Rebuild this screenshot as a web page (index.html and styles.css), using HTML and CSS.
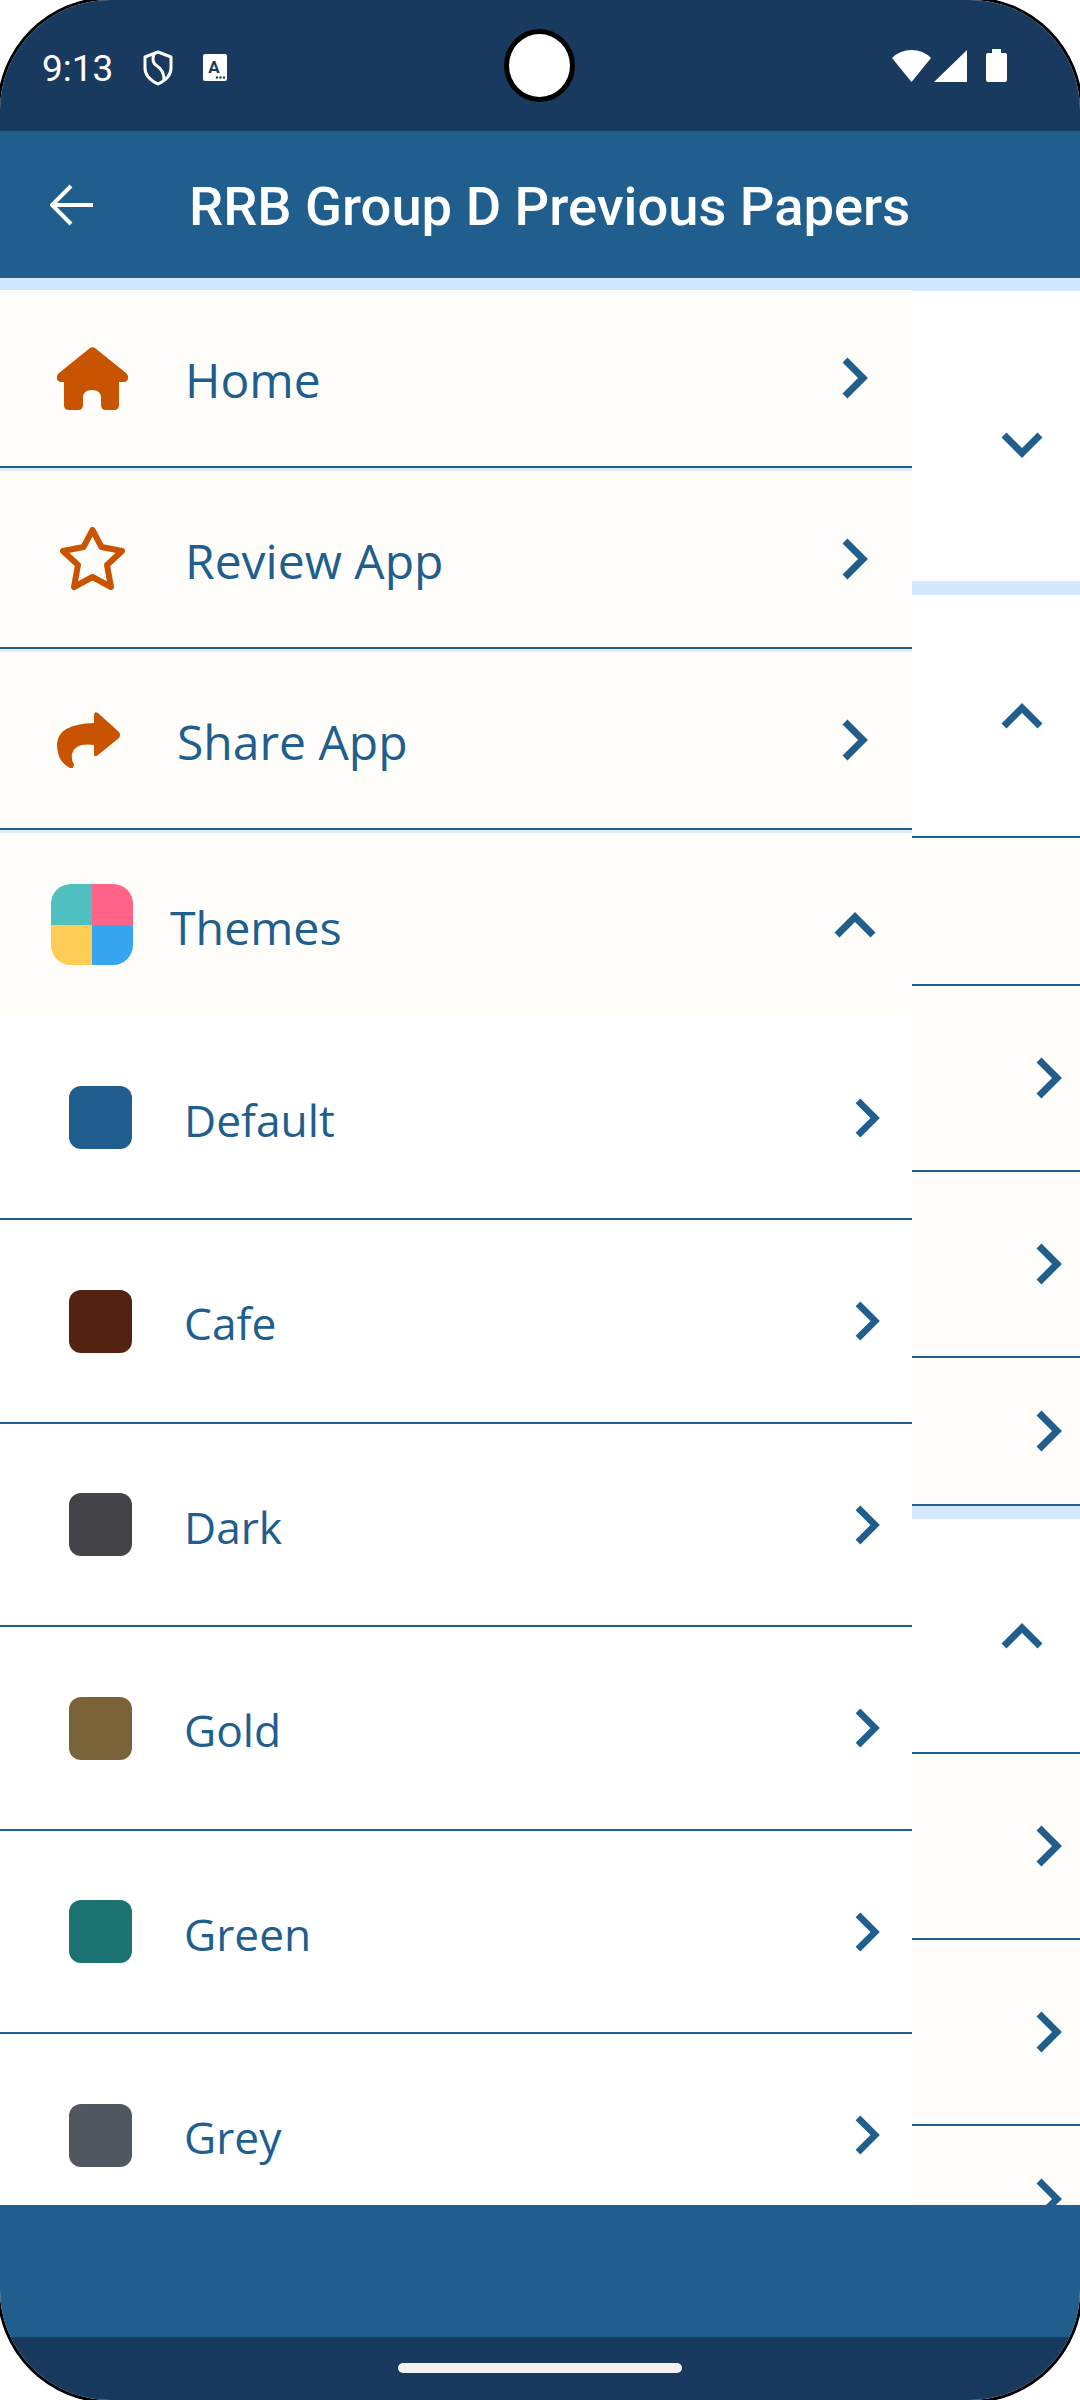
FILE: index.html
```html
<!DOCTYPE html>
<html lang="en">
<head>
    <meta charset="UTF-8">
    <meta name="viewport" content="width=device-width, initial-scale=1.0">
    <title>RRB Group D Previous Papers</title>
    <link rel="stylesheet" href="styles.css">
</head>
<body>
    <svg class="defs" width="0" height="0">
        <symbol id="chev-right" viewBox="0 0 26 42">
            <polyline points="3,3 21,21 3,39" fill="none" stroke="#205e8e" stroke-width="7"/>
        </symbol>
        <symbol id="chev-up" viewBox="0 0 42 26">
            <polyline points="3,23 21,5 39,23" fill="none" stroke="#205e8e" stroke-width="7"/>
        </symbol>
        <symbol id="chev-down" viewBox="0 0 42 26">
            <polyline points="3,3 21,21 39,3" fill="none" stroke="#205e8e" stroke-width="7"/>
        </symbol>
    </svg>

    <div class="phone">
        <div class="status">
            <span class="time">9:13</span>
            <svg class="shield" viewBox="0 0 30 36">
                <path d="M15 2 L28 7 V18 Q28 28 15 34 Q2 28 2 18 V7 Z" fill="none" stroke="#fff" stroke-width="3" stroke-linejoin="round"/>
                <path d="M11 4 Q8 12 14 16 Q21 20 21 30" fill="none" stroke="#fff" stroke-width="3"/>
            </svg>
            <svg class="a-icon" viewBox="0 0 24 27">
                <rect width="24" height="27" rx="2" fill="#fff"/>
                <text x="11" y="19" class="a-letter">A</text>
                <circle cx="14" cy="23.5" r="1.2" fill="#173a5e"/>
                <circle cx="17.5" cy="23.5" r="1.2" fill="#173a5e"/>
                <circle cx="21" cy="23.5" r="1.2" fill="#173a5e"/>
            </svg>
            <span class="status-right">
                <svg class="wifi" viewBox="0 0 39 32"><path d="M19.5 32 L0 8 Q8 0 19.5 0 Q31 0 39 8 Z" fill="#fff"/></svg>
                <svg class="signal" viewBox="0 0 33 32"><polygon points="33,0 33,32 0,32" fill="#fff"/></svg>
                <svg class="battery" viewBox="0 0 21 33"><path d="M6 0 H15 V4 H19 Q21 4 21 6 V31 Q21 33 19 33 H2 Q0 33 0 31 V6 Q0 4 2 4 H6 Z" fill="#fff"/></svg>
            </span>
        </div>

        <header class="appbar">
            <svg class="back" viewBox="0 0 43 42">
                <path d="M21 2 L2 21 L21 40 M2 21 H43" fill="none" stroke="#fff" stroke-width="4"/>
            </svg>
            <h1 class="title">RRB Group D Previous Papers</h1>
        </header>

        <main class="content">
            <!-- page under the drawer, only the right edge shows -->
            <div class="page">
                <div class="sec sec-first"><svg class="pg-toggle"><use href="#chev-down"/></svg></div>
                <div class="sec sec-open"><svg class="pg-toggle"><use href="#chev-up"/></svg></div>
                <div class="pg-row pg-short"></div>
                <div class="pg-row pg-tall"><svg class="pg-chev"><use href="#chev-right"/></svg></div>
                <div class="pg-row pg-tall"><svg class="pg-chev"><use href="#chev-right"/></svg></div>
                <div class="pg-row pg-short"><svg class="pg-chev"><use href="#chev-right"/></svg></div>
                <div class="sec sec-open sec-third"><svg class="pg-toggle"><use href="#chev-up"/></svg></div>
                <div class="pg-row pg-tall"><svg class="pg-chev"><use href="#chev-right"/></svg></div>
                <div class="pg-row pg-tall"><svg class="pg-chev"><use href="#chev-right"/></svg></div>
                <div class="pg-row pg-short"><svg class="pg-chev"><use href="#chev-right"/></svg></div>
            </div>

            <nav class="drawer">
                <div class="item">
                    <svg class="item-icon home-icon" viewBox="0 0 71 63">
                        <path d="M33 1 Q35.5 -0.5 38 1 L69 26 Q72 29 71 32 Q70 35 67 35 H62 V58 Q62 63 57 63 H49 Q44 63 44 58 V51 Q44 43 35 43 Q26 43 26 51 V58 Q26 63 21 63 H12 Q7 63 7 58 V35 H4 Q1 35 0 32 Q-1 29 2 26 Z" fill="#c85300"/>
                    </svg>
                    <span class="item-text">Home</span>
                    <svg class="chev"><use href="#chev-right"/></svg>
                </div>
                <div class="item">
                    <svg class="item-icon star-icon" viewBox="0 0 65 64">
                        <polygon points="32.5,3 41.5,20 62,24 47,38 51,60 32.5,50 14,60 18,38 3,24 23.5,20" fill="none" stroke="#c85300" stroke-width="6" stroke-linejoin="round"/>
                    </svg>
                    <span class="item-text">Review App</span>
                    <svg class="chev"><use href="#chev-right"/></svg>
                </div>
                <div class="item">
                    <svg class="item-icon share-icon" viewBox="0 0 63 56">
                        <path d="M37 3 Q37 -1 41 1 L62 20 Q64 23 62 26 L41 43 Q37 46 37 42 V33 Q18 30 15 42 Q14 48 17 52 Q17 57 13 56 Q0 50 0 32 Q1 12 37 11 Z" fill="#c85300"/>
                    </svg>
                    <span class="item-text item-text-share">Share App</span>
                    <svg class="chev"><use href="#chev-right"/></svg>
                </div>
                <div class="themes-head">
                    <div class="themes-icon">
                        <span class="q-teal"></span>
                        <span class="q-pink"></span>
                        <span class="q-yellow"></span>
                        <span class="q-blue"></span>
                    </div>
                    <span class="item-text themes-text">Themes</span>
                    <svg class="chev-open"><use href="#chev-up"/></svg>
                </div>
                <div class="theme">
                    <span class="swatch sw-default"></span>
                    <span class="theme-text">Default</span>
                    <svg class="chev-sub"><use href="#chev-right"/></svg>
                </div>
                <div class="theme">
                    <span class="swatch sw-cafe"></span>
                    <span class="theme-text">Cafe</span>
                    <svg class="chev-sub"><use href="#chev-right"/></svg>
                </div>
                <div class="theme">
                    <span class="swatch sw-dark"></span>
                    <span class="theme-text">Dark</span>
                    <svg class="chev-sub"><use href="#chev-right"/></svg>
                </div>
                <div class="theme">
                    <span class="swatch sw-gold"></span>
                    <span class="theme-text">Gold</span>
                    <svg class="chev-sub"><use href="#chev-right"/></svg>
                </div>
                <div class="theme">
                    <span class="swatch sw-green"></span>
                    <span class="theme-text">Green</span>
                    <svg class="chev-sub"><use href="#chev-right"/></svg>
                </div>
                <div class="theme">
                    <span class="swatch sw-grey"></span>
                    <span class="theme-text">Grey</span>
                    <svg class="chev-sub"><use href="#chev-right"/></svg>
                </div>
            </nav>
        </main>

        <div class="bottom-bar"></div>
        <div class="nav-bar"><span class="home-line"></span></div>

        <span class="camera"></span>
    </div>
</body>
</html>
```

FILE: styles.css
```css
html, body {
    margin: 0;
    padding: 0;
    background-color: #fff;
}

body {
    overflow: hidden;
}

.defs {
    position: absolute;
}

/* the black rim only shows at the rounded corners */
.phone {
    position: relative;
    width: 1080px;
    height: 2400px;
    display: flex;
    flex-direction: column;
    overflow: hidden;
    border-radius: 110px;
    box-shadow: 0 0 0 3px #000;
    font-family: "Open Sans", sans-serif;
}

.status {
    height: 131px;
    flex: none;
    box-sizing: border-box;
    padding: 0 73px 0 42px;
    display: flex;
    align-items: center;
    background-color: #173a5e;
    color: #fff;
}

.time {
    font-family: Roboto, sans-serif;
    font-size: 37px;
    width: 101px;
    margin-top: 5px;
}

.shield {
    width: 30px;
    height: 36px;
    margin-top: 5px;
}

.a-icon {
    width: 24px;
    height: 27px;
    margin-left: 30px;
    margin-top: 3px;
}

.a-letter {
    font-family: Roboto, sans-serif;
    font-size: 17px;
    font-weight: 700;
    fill: #173a5e;
    text-anchor: middle;
}

.status-right {
    margin-left: auto;
    display: flex;
    align-items: center;
}

.wifi {
    width: 39px;
    height: 32px;
}

.signal {
    width: 33px;
    height: 32px;
    margin-left: 3px;
}

.battery {
    width: 21px;
    height: 33px;
    margin-left: 19px;
}

.appbar {
    height: 147px;
    flex: none;
    box-sizing: border-box;
    padding-left: 50px;
    display: flex;
    align-items: center;
    background-color: #205e8e;
}

.back {
    width: 43px;
    height: 42px;
}

.title {
    margin: 4px 0 0 96px;
    font-family: Roboto, sans-serif;
    font-size: 54.3px;
    font-weight: 500;
    color: #fff;
}

.content {
    position: relative;
    flex: 1;
    overflow: hidden;
    background-color: #d3e9ff;
}

.page {
    padding-top: 13px;
}

.sec {
    display: flex;
    justify-content: flex-end;
    background-color: #fff;
}

.sec-first {
    height: 290px;
    margin-bottom: 14px;
    align-items: flex-start;
    padding-right: 37px;
}

.sec-first .pg-toggle {
    margin-top: 141px;
}

.sec-open {
    height: 241px;
    align-items: center;
    padding-right: 37px;
    border-bottom: 2px solid #205e8e;
}

.sec-third {
    height: 233px;
}

.pg-toggle {
    width: 42px;
    height: 26px;
}

.pg-row {
    display: flex;
    justify-content: flex-end;
    align-items: center;
    padding-right: 18px;
    background-color: #fffdf9;
    border-bottom: 2px solid #205e8e;
}

.pg-short {
    height: 146px;
}

.pg-tall {
    height: 184px;
}

/* last of a block sits on the blue stripe */
.pg-row + .sec-third {
    margin-top: 13px;
}

.pg-chev {
    width: 26px;
    height: 42px;
}

.drawer {
    position: absolute;
    left: 0;
    top: 12px;
    width: 912px;
    background-color: #dfeefd;
}

.item {
    height: 176px;
    margin-bottom: 3px;
    display: flex;
    align-items: center;
    background-color: #fffdf9;
    border-bottom: 2px solid #205e8e;
}

.item-icon {
    flex: none;
}

.home-icon {
    width: 71px;
    height: 63px;
    margin-left: 57px;
}

.star-icon {
    width: 65px;
    height: 64px;
    margin-left: 60px;
}

.share-icon {
    width: 63px;
    height: 56px;
    margin-left: 57px;
}

.item-text {
    font-size: 48px;
    color: #205e8e;
    margin-left: 57px;
    padding-top: 2px;
}

.star-icon + .item-text {
    margin-left: 60px;
}

.item-text-share {
    margin-left: 57px;
}

.chev {
    width: 26px;
    height: 42px;
    margin-left: auto;
    margin-right: 44px;
}

.themes-head {
    height: 183.5px;
    display: flex;
    align-items: center;
    background-color: #fffdf9;
}

.themes-icon {
    width: 82px;
    height: 81px;
    margin-left: 51px;
    flex: none;
    display: grid;
    grid-template-columns: 1fr 1fr;
    grid-template-rows: 1fr 1fr;
    border-radius: 20px;
    overflow: hidden;
}

.q-teal { background-color: #4fbfbf; }
.q-pink { background-color: #ff6488; }
.q-yellow { background-color: #ffcc55; }
.q-blue { background-color: #38a5ef; }

.themes-text {
    font-size: 46.5px;
    margin-left: 37px;
    padding-top: 4px;
}

.chev-open {
    width: 42px;
    height: 26px;
    margin-left: auto;
    margin-right: 36px;
}

.theme {
    height: 203.5px;
    box-sizing: border-box;
    display: flex;
    align-items: center;
    background-color: #fff;
    border-bottom: 2px solid #205e8e;
}

.swatch {
    width: 63px;
    height: 63px;
    margin-left: 69px;
    margin-top: 1px;
    flex: none;
    border-radius: 12px;
}

.sw-default { background-color: #205e8e; }
.sw-cafe { background-color: #532211; }
.sw-dark { background-color: #444347; }
.sw-gold { background-color: #7a6338; }
.sw-green { background-color: #1a7370; }
.sw-grey { background-color: #52565e; }

.theme-text {
    font-size: 44.3px;
    color: #205e8e;
    margin-left: 52px;
    padding-top: 5px;
}

.chev-sub {
    width: 25px;
    height: 40px;
    margin-left: auto;
    margin-right: 32px;
    margin-top: 1px;
}

.bottom-bar {
    height: 132px;
    flex: none;
    background-color: #205e8e;
}

.nav-bar {
    height: 63px;
    flex: none;
    display: flex;
    justify-content: center;
    padding-top: 26px;
    box-sizing: border-box;
    background-color: #173a5e;
}

.home-line {
    width: 284px;
    height: 10px;
    border-radius: 5px;
    background-color: #f2f2f2;
}

.camera {
    position: absolute;
    left: 504px;
    top: 29px;
    width: 61px;
    height: 63px;
    border: 5px solid #000;
    border-radius: 50%;
    background-color: #fff;
}
```
